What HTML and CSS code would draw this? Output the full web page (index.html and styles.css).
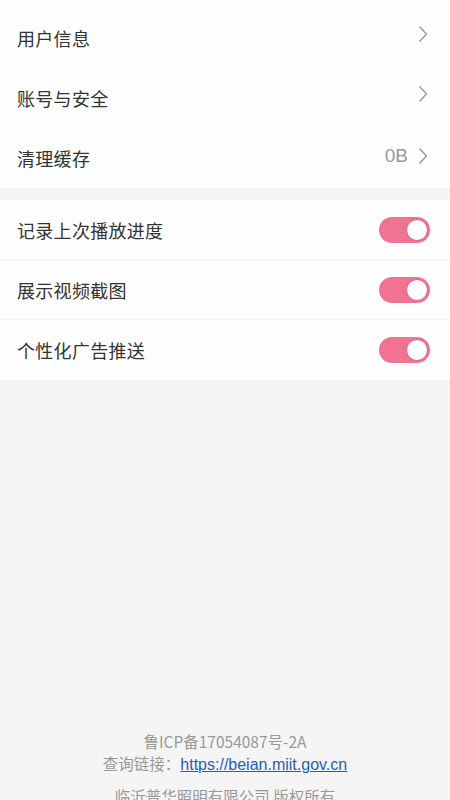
FILE: index.html
```html
<!DOCTYPE html>
<html lang="zh">
<head>
<meta charset="utf-8">
<link rel="stylesheet" href="styles.css">
</head>
<body>
<div class="page">
  <section class="group first">
    <div class="row"><span class="label">用户信息</span><span class="right"><svg class="chev" viewBox="0 0 10 18"><path d="M1.5 1.5 L8.5 9 L1.5 16.5"/></svg></span></div>
    <div class="row"><span class="label">账号与安全</span><span class="right"><svg class="chev" viewBox="0 0 10 18"><path d="M1.5 1.5 L8.5 9 L1.5 16.5"/></svg></span></div>
    <div class="row"><span class="label">清理缓存</span><span class="right"><span class="value">0B</span><svg class="chev" viewBox="0 0 10 18"><path d="M1.5 1.5 L8.5 9 L1.5 16.5"/></svg></span></div>
  </section>
  <div class="gap"></div>
  <section class="group">
    <div class="row sep"><span class="label">记录上次播放进度</span><span class="toggle"><span class="knob"></span></span></div>
    <div class="row sep"><span class="label">展示视频截图</span><span class="toggle"><span class="knob"></span></span></div>
    <div class="row"><span class="label">个性化广告推送</span><span class="toggle"><span class="knob"></span></span></div>
  </section>
  <footer class="footer">
    <p>鲁ICP备17054087号-2A</p>
    <p>查询链接：<a href="#">https://beian.miit.gov.cn</a></p>
    <p class="company">临沂普华照明有限公司 版权所有</p>
  </footer>
</div>
</body>
</html>
```
FILE: styles.css
```css
* { box-sizing: border-box; }
html, body { margin: 0; padding: 0; }
body {
  background: #f5f5f5;
  font-family: "Noto Sans CJK SC", "Noto Sans", sans-serif;
  color: #333;
  width: 450px;
  height: 800px;
  overflow: hidden;
}
.page {
  display: flex;
  flex-direction: column;
  height: 800px;
}
.group { background: #fefefe; }
.group.first { padding-top: 8px; }
.gap { height: 12px; }
.row {
  height: 60px;
  display: flex;
  align-items: center;
  justify-content: space-between;
  padding: 0 22px 0 17px;
}
.row.sep { border-bottom: 1px solid #f3f3f3; }
.label {
  font-size: 18px;
  color: #333;
  letter-spacing: 0.3px;
}
.right {
  display: flex;
  align-items: center;
  gap: 10px;
  margin-top: -8px;
}
.first .row:nth-child(3) .right { margin-top: -4px; }
.value {
  font-family: "Liberation Sans", Arial, sans-serif;
  font-size: 19px;
  color: #999;
}
.chev {
  width: 10px;
  height: 18px;
  fill: none;
  stroke: #999;
  stroke-width: 1.4;
}
.toggle {
  width: 51px;
  height: 26px;
  border-radius: 13px;
  background: #f07392;
  display: flex;
  align-items: center;
  justify-content: flex-end;
  padding: 2px;
  margin-right: -2px;
}
.knob {
  width: 22px;
  height: 22px;
  border-radius: 50%;
  background: #fff;
  border: 1px solid #e0607f;
}
.footer {
  margin-top: auto;
  text-align: center;
  font-size: 15.5px;
  color: #999;
  line-height: 22px;
  margin-bottom: -7px;
}
.footer p { margin: 0; }
.footer a { color: #1f5fb8; text-decoration: underline; font-family: "Liberation Sans", Arial, sans-serif; font-size: 16px; }
.footer .company { margin-top: 9px; }
```
